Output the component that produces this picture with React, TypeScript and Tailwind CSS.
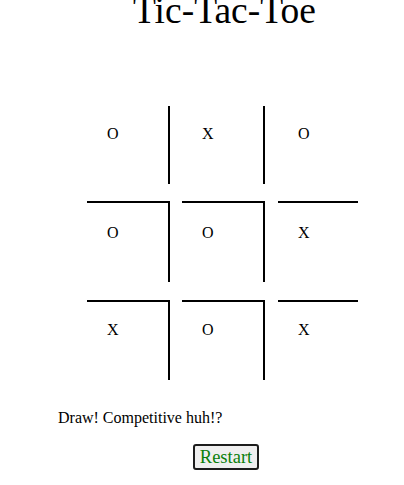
const rows: string[][] = [
  ['O', 'X', 'O'],
  ['O', 'O', 'X'],
  ['X', 'O', 'X'],
];

// per-row box geometry, read off the screenshot
const rowStyles = [
  'mt-[76px] h-[78px]',
  'mt-[17px] h-[81px]',
  'mt-[18px] h-[80px]',
];
const padTop = ['pt-[19px]', 'pt-[21px]', 'pt-[19px]'];

export default function App() {
  return (
    <div className="flex flex-col font-['Liberation_Serif',serif] text-black bg-white min-h-[485px]">
      <h1 className="-mt-[8px] pl-[133px] text-[37.5px] leading-[38px] font-normal">Tic-Tac-Toe</h1>

      <div className="flex flex-col pl-[87px]">
        {rows.map((row, r) => (
          <div key={r} className={`flex ${rowStyles[r]}`}>
            {row.map((mark, c) => {
              const top = r > 0 ? 'border-t-2' : '';
              const right = c < 2 ? 'border-r-2' : '';
              const width = c < 2 ? 'w-[83px]' : 'w-[80px]';
              const gap = c === 0 ? 'mr-[12px]' : c === 1 ? 'mr-[13px]' : '';
              return (
                <div
                  key={c}
                  className={`${width} ${gap} ${top} ${right} border-black h-full pl-5 ${padTop[r]} text-[16px] leading-[18px]`}
                >
                  {mark}
                </div>
              );
            })}
          </div>
        ))}
      </div>

      <p className="mt-[29px] pl-[58px] text-[16px] leading-[18px]">Draw! Competitive huh!?</p>

      <button className="self-start ml-[193px] mt-[17px] w-[66px] h-[26px] flex items-center justify-center border-2 border-[#1c1c1c] rounded-[3px] bg-[#efefef] text-[#0a800a] text-[18.5px] leading-none font-['Liberation_Serif',serif]">
        Restart
      </button>
    </div>
  );
}
